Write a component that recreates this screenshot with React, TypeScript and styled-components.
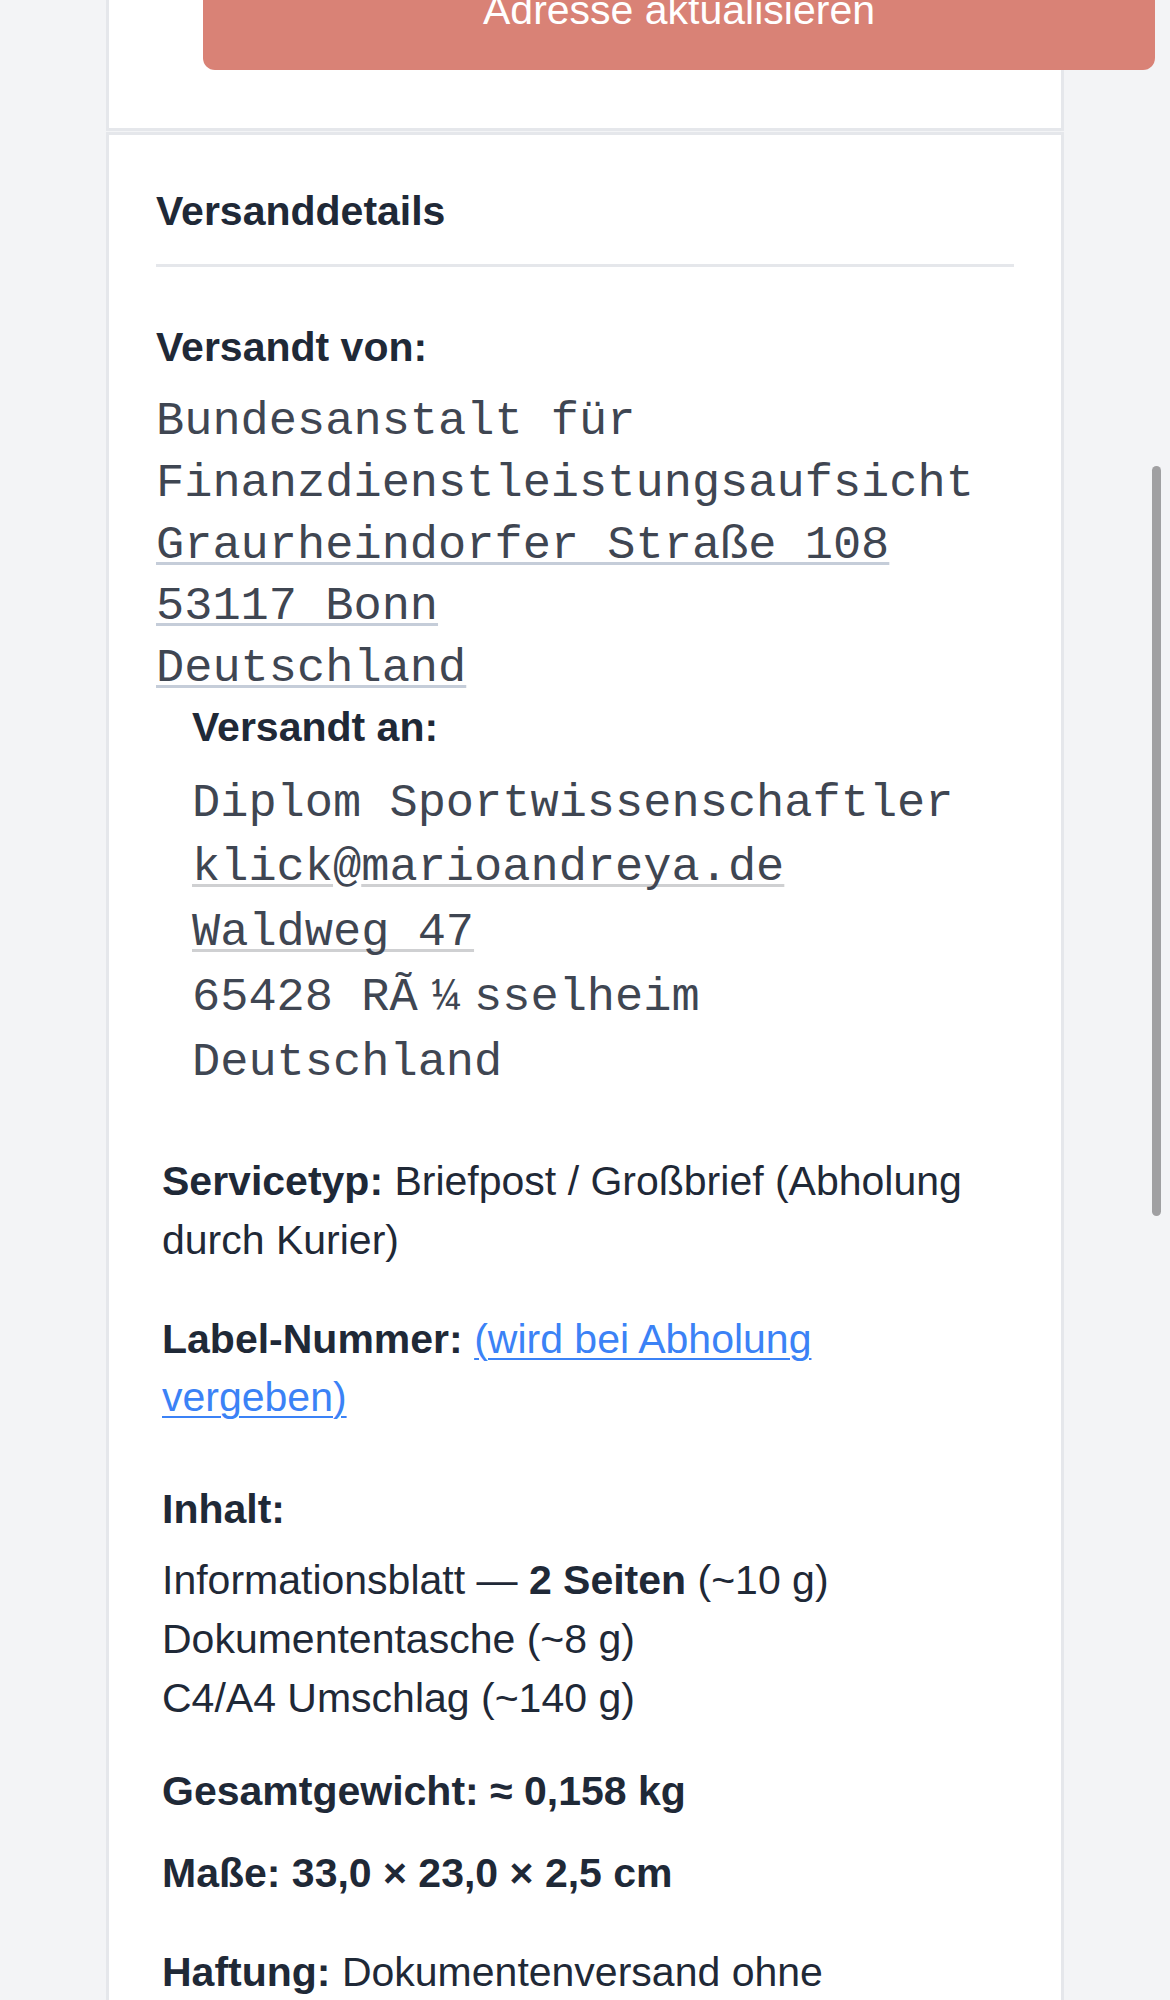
import styled, { createGlobalStyle } from "styled-components";

const GlobalStyle = createGlobalStyle`
  html, body {
    margin: 0;
    padding: 0;
    background: #f3f4f6;
  }
  body {
    font-family: "Liberation Sans", Arial, sans-serif;
    color: #1f2937;
    overflow: hidden;
  }
`;

const Page = styled.div`
  position: relative;
  height: 2000px;
  overflow: hidden;
`;

// the page is scrolled a bit, so the top of the first card is out of view
const Scroller = styled.div`
  margin-top: -99px;
  display: flex;
  flex-direction: column;
  align-items: center;
  gap: 1px;
`;

const Card = styled.section`
  box-sizing: border-box;
  width: 958px;
  padding: 47px;
  background: #fff;
  border: 3px solid #e5e7eb;
`;

const UpdateButton = styled.button`
  display: block;
  width: 952px;
  margin: 0 0 11px 47px;
  padding: 30px 0;
  border: none;
  border-radius: 12px;
  background: #d98276;
  color: #fff;
  font-family: inherit;
  font-size: 41px;
  line-height: 58.8px;
  text-align: center;
`;

const Title = styled.h2`
  margin: 0;
  padding-bottom: 23px;
  border-bottom: 3px solid #e5e7eb;
  font-size: 41px;
  line-height: 58.8px;
  font-weight: 700;
`;

const AddressGroup = styled.div<{ $indent?: number; $top?: number }>`
  margin-left: ${(p) => p.$indent ?? 0}px;
  margin-top: ${(p) => p.$top ?? 0}px;
`;

const GroupLabel = styled.div`
  font-size: 41px;
  line-height: 58.8px;
  font-weight: 700;
`;

const Address = styled.div<{ $lh: number; $after?: number }>`
  margin-top: 15px;
  margin-bottom: ${(p) => p.$after ?? 0}px;
  font-family: "Liberation Mono", "Courier New", monospace;
  font-size: 47px;
  line-height: ${(p) => p.$lh}px;
  color: #3f4652;
  white-space: pre;
`;

const Detected = styled.span<{ $tone: string }>`
  text-decoration: underline;
  text-decoration-color: ${(p) => p.$tone};
  text-decoration-thickness: 3px;
  text-underline-offset: 4px;
  text-decoration-skip-ink: none;
`;

// the broken "ü" shows up a cell wider in the original
const Garbled = styled.span`
  display: inline-block;
  width: 2ch;
  text-align: center;
`;

const Info = styled.p<{ $top: number }>`
  max-width: 820px;
  margin: ${(p) => p.$top}px 0 0 6px;
  font-size: 41px;
  line-height: 58.8px;
`;

const Link = styled.a`
  color: #3b82f6;
  text-decoration: underline;
  text-decoration-thickness: 2px;
  text-underline-offset: 5px;
`;

const ItemList = styled.ul`
  list-style: none;
  margin: 12px 0 0 6px;
  padding: 0;
  font-size: 41px;
  line-height: 59px;
`;

const ScrollThumb = styled.div`
  position: absolute;
  top: 466px;
  right: 9px;
  width: 9px;
  height: 750px;
  border-radius: 5px;
  background: #a0a0a2;
`;

export default function App() {
  return (
    <Page>
      <GlobalStyle />
      <Scroller>
        <Card>
          <UpdateButton type="button">Adresse aktualisieren</UpdateButton>
        </Card>

        <Card>
          <Title>Versanddetails</Title>

          <AddressGroup $top={51}>
            <GroupLabel>Versandt von:</GroupLabel>
            <Address $lh={61.6} $after={-1.5}>
              <div>Bundesanstalt für</div>
              <div>Finanzdienstleistungsaufsicht</div>
              <div>
                <Detected $tone="#c5cdd9">Graurheindorfer Straße 108</Detected>
              </div>
              <div>
                <Detected $tone="#c5cdd9">53117 Bonn</Detected>
              </div>
              <div>
                <Detected $tone="#c5cdd9">Deutschland</Detected>
              </div>
            </Address>
          </AddressGroup>

          <AddressGroup $indent={36}>
            <GroupLabel>Versandt an:</GroupLabel>
            <Address $lh={64.75}>
              <div>Diplom Sportwissenschaftler</div>
              <div>
                <Detected $tone="#cfd0d2">klick</Detected>@<Detected $tone="#cfd0d2">marioandreya.de</Detected>
              </div>
              <div>
                <Detected $tone="#cfd0d2">Waldweg 47</Detected>
              </div>
              <div>
                65428 RÃ<Garbled>¼</Garbled>sselheim
              </div>
              <div>Deutschland</div>
            </Address>
          </AddressGroup>

          <Info $top={56.5}>
            <strong>Servicetyp:</strong> Briefpost / Großbrief (Abholung durch Kurier)
          </Info>

          <Info $top={40}>
            <strong>Label-Nummer:</strong> <Link href="#">(wird bei Abholung vergeben)</Link>
          </Info>

          <Info $top={53}>
            <strong>Inhalt:</strong>
          </Info>
          <ItemList>
            <li>
              Informationsblatt — <strong>2 Seiten</strong> (~10 g)
            </li>
            <li>Dokumententasche (~8 g)</li>
            <li>C4/A4 Umschlag (~140 g)</li>
          </ItemList>

          <Info $top={34.3}>
            <strong>Gesamtgewicht: ≈ 0,158 kg</strong>
          </Info>

          <Info $top={22.7}>
            <strong>Maße: 33,0 × 23,0 × 2,5 cm</strong>
          </Info>

          <Info $top={40.8}>
            <strong>Haftung:</strong> Dokumentenversand ohne Wertangabe
          </Info>
        </Card>
      </Scroller>
      <ScrollThumb />
    </Page>
  );
}
